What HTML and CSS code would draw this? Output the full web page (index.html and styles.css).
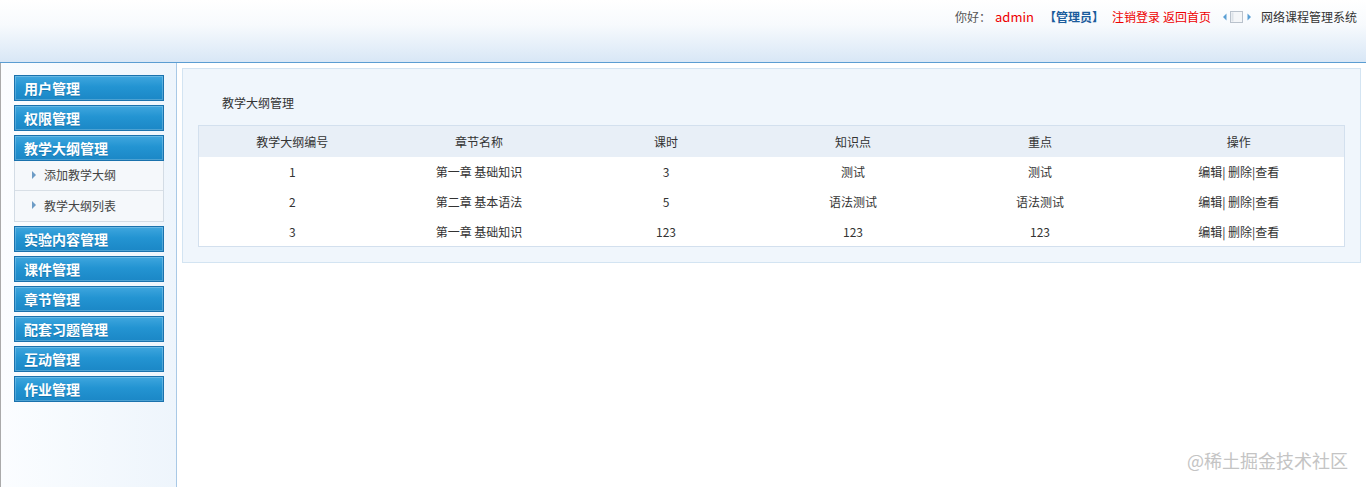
FILE: index.html
```html
<!DOCTYPE html>
<html lang="zh-CN">

<head>
  <meta charset="UTF-8" />
  <title>网络课程管理系统</title>
  <link rel="stylesheet" href="styles.css">
</head>

<body>
  <div class="top">
    <div class="top-bar">
      <span class="hello">你好：</span>
      <span class="user">admin</span>
      <span class="role">【管理员】</span>
      <a class="link" href="#">注销登录</a>
      <a class="link" href="#">返回首页</a>
      <span class="pager">
        <svg width="34" height="14" viewBox="0 0 34 14">
          <path d="M3 7 L6.5 3.5 L6.5 10.5 Z" fill="#5a9fd4" />
          <rect x="10.5" y="1.5" width="12" height="11" fill="#f4f6f8" stroke="#b9c2cc" />
          <rect x="11.5" y="2.5" width="2" height="9" fill="#dde3e9" />
          <path d="M31 7 L27.5 3.5 L27.5 10.5 Z" fill="#5a9fd4" />
        </svg>
      </span>
      <span class="sys">网络课程管理系统</span>
    </div>
  </div>

  <div class="layout">
    <div class="side">
      <div class="menu">用户管理</div>
      <div class="menu">权限管理</div>
      <div class="menu">教学大纲管理</div>
      <ul class="sub">
        <li><span class="arrow"></span>添加教学大纲</li>
        <li><span class="arrow"></span>教学大纲列表</li>
      </ul>
      <div class="menu">实验内容管理</div>
      <div class="menu">课件管理</div>
      <div class="menu">章节管理</div>
      <div class="menu">配套习题管理</div>
      <div class="menu">互动管理</div>
      <div class="menu">作业管理</div>
    </div>

    <div class="main">
      <div class="box">
        <div class="box-title">教学大纲管理</div>
        <table class="grid">
          <thead>
            <tr>
              <th>教学大纲编号</th>
              <th>章节名称</th>
              <th>课时</th>
              <th>知识点</th>
              <th>重点</th>
              <th class="ops">操作</th>
            </tr>
          </thead>
          <tbody>
            <tr>
              <td>1</td>
              <td>第一章 基础知识</td>
              <td>3</td>
              <td>测试</td>
              <td>测试</td>
              <td>编辑| 删除|查看</td>
            </tr>
            <tr>
              <td>2</td>
              <td>第二章 基本语法</td>
              <td>5</td>
              <td>语法测试</td>
              <td>语法测试</td>
              <td>编辑| 删除|查看</td>
            </tr>
            <tr>
              <td>3</td>
              <td>第一章 基础知识</td>
              <td>123</td>
              <td>123</td>
              <td>123</td>
              <td>编辑| 删除|查看</td>
            </tr>
          </tbody>
        </table>
      </div>
    </div>
  </div>

  <div class="mark">@稀土掘金技术社区</div>
</body>

</html>
```

FILE: styles.css
```css
* {
  box-sizing: border-box;
}

body {
  margin: 0;
  font-family: "Noto Sans CJK SC", "Noto Sans", sans-serif;
  font-size: 12px;
  color: #333;
  background: #fff;
}

a {
  text-decoration: none;
}

/* header */
.top {
  height: 63px;
  background: linear-gradient(#ffffff 0%, #f7fafd 40%, #d8e7f6 100%);
  border-bottom: 1px solid #5b9dd2;
}

.top-bar {
  display: flex;
  justify-content: flex-end;
  align-items: center;
  height: 34px;
  padding-right: 9px;
  line-height: 14px;
}

.hello {
  color: #555;
}

.user {
  color: #e00;
  margin-left: 4px;
  font-size: 13px;
}

.role {
  color: #1b5c9c;
  font-weight: bold;
  margin-left: 10px;
  margin-right: 8px;
}

.link {
  color: #e00;
  margin-right: 3px;
}

.pager {
  display: flex;
  margin: 0 7px 0 6px;
}

.sys {
  color: #333;
}

/* body */
.layout {
  display: flex;
  min-height: calc(100vh - 63px);
}

.side {
  width: 177px;
  flex: none;
  padding: 12px 0 0 13px;
  border-left: 1px solid #aaa;
  border-right: 1px solid #a9c9e6;
  background: linear-gradient(to right, #fbfdff, #eef5fc);
}

.menu {
  width: 150px;
  height: 26px;
  margin-bottom: 4px;
  padding-left: 9px;
  line-height: 25px;
  font-size: 14px;
  font-weight: bold;
  color: #fff;
  text-shadow: 0 1px 0 rgba(0, 40, 80, 0.25);
  background: linear-gradient(#3fa6de, #2394d2 45%, #1b87c6);
  border: 1px solid #1a72ad;
  box-shadow: inset 0 0 0 1px rgba(255, 255, 255, 0.22);
}

.sub {
  list-style: none;
  width: 150px;
  margin: -4px 0 4px;
  padding: 0;
  background: #f5f8fb;
  border: 1px solid #d3dce5;
  border-top: none;
}

.sub li {
  display: flex;
  align-items: center;
  height: 30px;
  padding-left: 17px;
  padding-bottom: 2px;
  color: #444;
  border-bottom: 1px solid #d8dfe6;
}

.sub li:last-child {
  border-bottom: none;
}

.arrow {
  width: 0;
  height: 0;
  margin-right: 8px;
  border-top: 4px solid transparent;
  border-bottom: 4px solid transparent;
  border-left: 4px solid #6d9cc6;
}

.main {
  flex: 1;
  padding: 5px 5px 0 5px;
}

.box {
  padding: 0 15px 15px;
  background: #f0f6fc;
  border: 1px solid #d3e4f2;
}

.box-title {
  padding: 24px 0 12px 24px;
  line-height: 20px;
  color: #333;
}

.grid {
  width: 100%;
  border-collapse: collapse;
  background: #fff;
  border: 1px solid #d3e0ee;
}

.grid th {
  width: 187px;
  height: 31px;
  font-weight: normal;
  background: #e8eff7;
  color: #333;
}

.grid th.ops {
  width: auto;
}

.grid td {
  height: 30px;
  text-align: center;
  color: #333;
}

.mark {
  position: absolute;
  right: 18px;
  bottom: 14px;
  font-size: 18px;
  color: #c4c4c4;
}
```
